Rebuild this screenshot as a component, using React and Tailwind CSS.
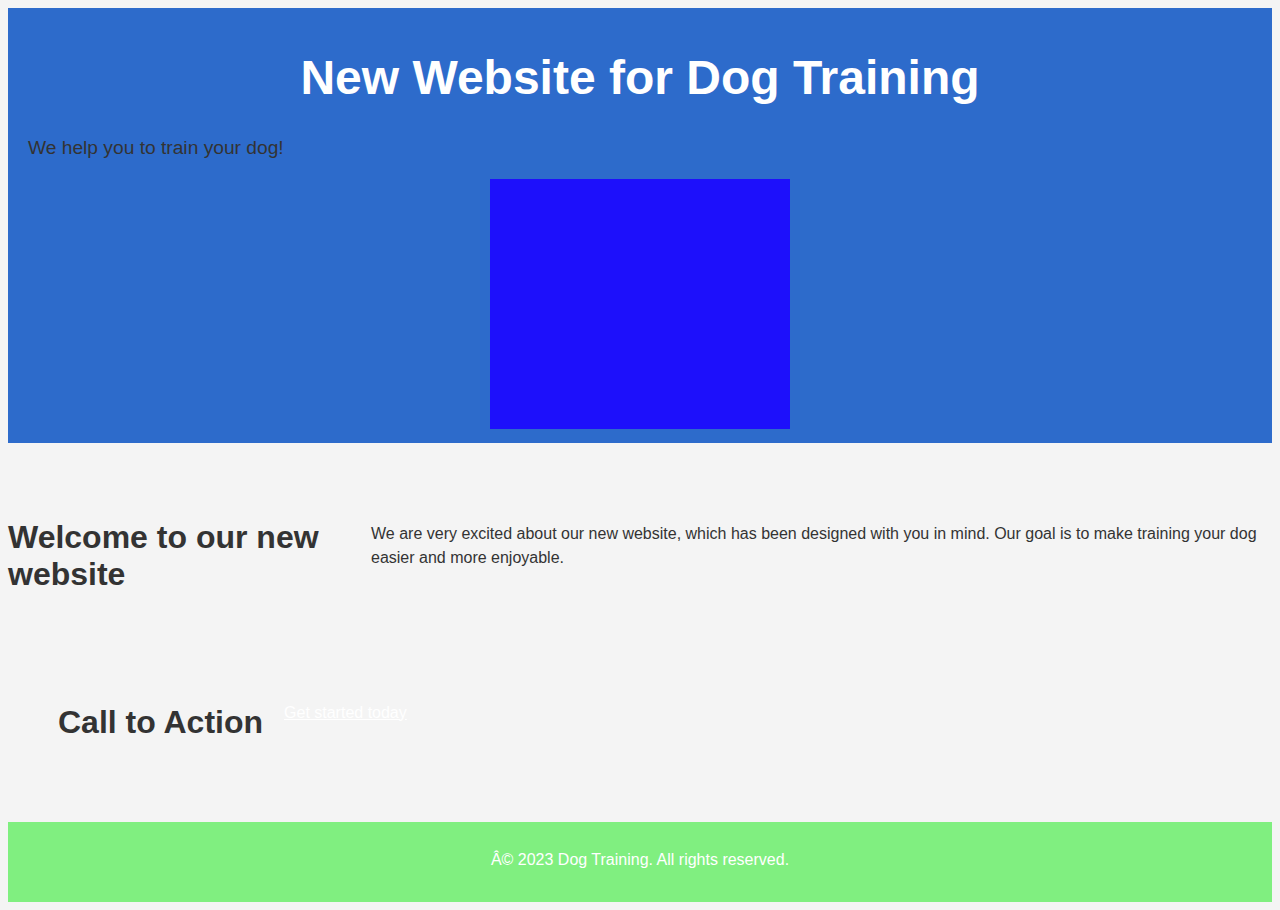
import React from 'react';

const App = () => {
  return (
    <div className="min-h-screen bg-[#f4f4f4] p-2 text-[#333] font-['Liberation_Sans',Arial,sans-serif]">
      <header className="bg-[#2d6bcb] px-5 pt-[10px] pb-[14px]">
        <h1 className="mt-8 text-center text-5xl leading-[55px] font-bold text-white">New Website for Dog Training</h1>
        <p className="mt-8 text-[19.2px] leading-[22px]">We help you to train your dog!</p>
        <div className="mx-auto mt-5 h-[250px] w-[300px] bg-[#1d10fb]"></div>
      </header>

      <section className="flex items-start gap-10 pt-[76px]">
        <h2 className="w-[323px] shrink-0 text-[32px] leading-[36.8px] font-bold">Welcome to our new website</h2>
        <p className="mt-[3px] flex-1 text-base leading-6">
          We are very excited about our new website, which has been designed with you in mind. Our goal is to make training your dog easier and more enjoyable.
        </p>
      </section>

      <section className="flex items-start gap-[21px] pl-[50px] pt-[111px] pb-[82px]">
        <h2 className="text-[32px] leading-[36.8px] font-bold">Call to Action</h2>
        <a href="#" className="text-base leading-[18.4px] text-white underline">Get started today</a>
      </section>

      <footer className="flex h-20 items-center justify-center bg-[#80ef80] pb-1">
        <p className="text-base text-white">Â© 2023 Dog Training. All rights reserved.</p>
      </footer>
    </div>
  );
};

export default App;
